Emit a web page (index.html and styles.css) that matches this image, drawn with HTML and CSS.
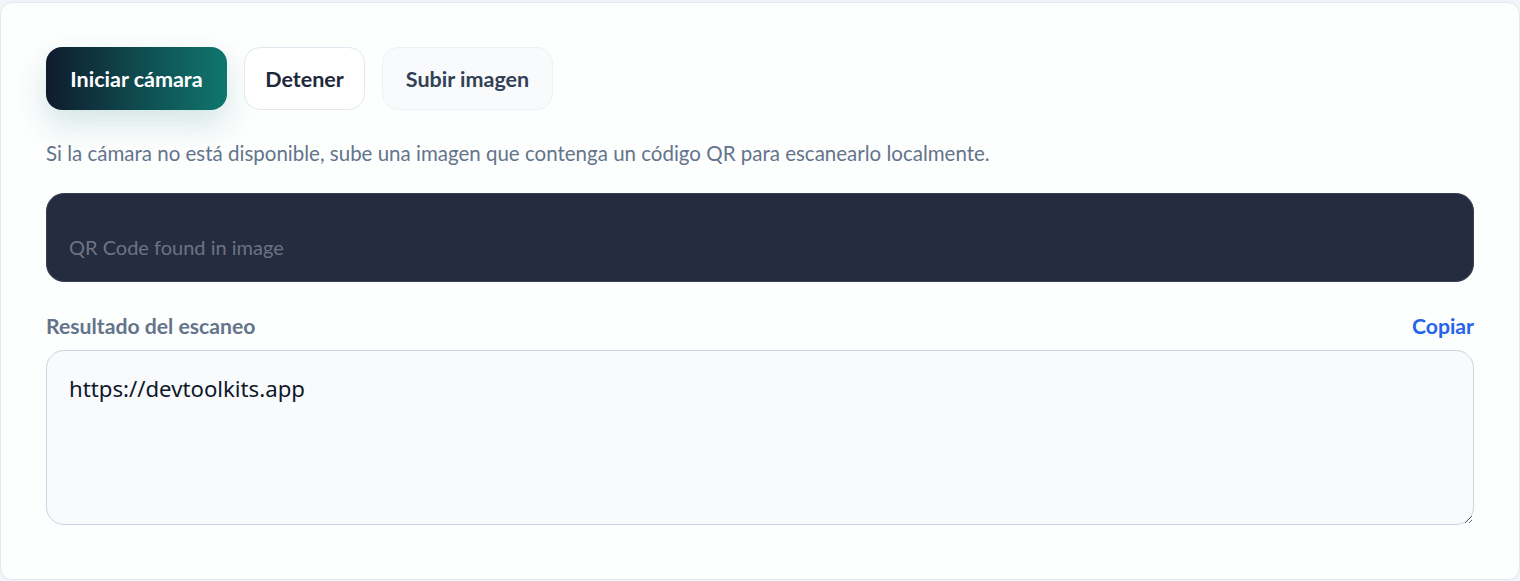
FILE: index.html
```html
<!DOCTYPE html>
<html lang="es">
  <head>
    <meta charset="UTF-8" />
    <meta name="viewport" content="width=device-width, initial-scale=1.0" />
    <title>Escáner QR</title>
    <link rel="stylesheet" href="styles.css">
  </head>
  <body>
    <div class="scanner-card">
      <div class="actions">
        <button class="btn btn-primary">Iniciar cámara</button>
        <button class="btn btn-outline">Detener</button>
        <button class="btn btn-soft">Subir imagen</button>
      </div>
      <p class="hint">
        Si la cámara no está disponible, sube una imagen que contenga un código QR para escanearlo localmente.
      </p>
      <div class="preview">
        <span class="preview-status">QR Code found in image</span>
      </div>
      <div class="result-head">
        <label for="result">Resultado del escaneo</label>
        <button class="copy-btn">Copiar</button>
      </div>
      <textarea id="result" class="result">https://devtoolkits.app</textarea>
    </div>
  </body>
</html>
```

FILE: styles.css
```css
* {
  box-sizing: border-box;
}
body {
  margin: 0;
  padding-top: 2px;
  font-family: "Lato", "Liberation Sans", sans-serif;
  background: #f1f5f9;
}
.scanner-card {
  background: #fdfefe;
  border: 1px solid #e2e8f0;
  border-radius: 12px;
  padding: 44px 45px 53px;
  height: 578px;
}
.actions {
  display: flex;
  gap: 17px;
}
.btn {
  height: 63px;
  padding: 0;
  border-radius: 16px;
  font-family: inherit;
  font-size: 21.5px;
  font-weight: 700;
  color: #1e293b;
  cursor: pointer;
}
.btn-primary {
  width: 181px;
  border: none;
  color: #ffffff;
  background: linear-gradient(90deg, #0f1b2d 0%, #0f4f52 55%, #0f766e 100%);
  box-shadow: 0 14px 30px rgba(15, 118, 110, 0.18);
}
.btn-outline {
  width: 121px;
  background: #ffffff;
  border: 1px solid #e2e8f0;
}
.btn-soft {
  width: 171px;
  background: #f8fafc;
  border: 1px solid #eef2f6;
  color: #334155;
}
.hint {
  margin: 29px 0 26px;
  font-size: 20.5px;
  line-height: 28px;
  color: #64748b;
}
.preview {
  height: 89px;
  border-radius: 18px;
  background: #262c40;
  border: 1px solid #3a4152;
  display: flex;
  align-items: flex-end;
  padding: 0 22px 20px;
}
.preview-status {
  font-size: 20px;
  line-height: 28px;
  color: #6b7385;
}
.result-head {
  display: flex;
  justify-content: space-between;
  align-items: center;
  margin: 31px 0 11px;
}
.result-head label {
  font-size: 21.2px;
  line-height: 26px;
  font-weight: 700;
  color: #64748b;
}
.copy-btn {
  border: none;
  background: none;
  padding: 0;
  font-family: inherit;
  font-size: 21.2px;
  font-weight: 700;
  color: #2563eb;
  cursor: pointer;
}
.result {
  display: block;
  width: 100%;
  height: 175px;
  padding: 22px 22px;
  border: 1px solid #cbd5e1;
  border-radius: 18px;
  background: #f8fafc;
  font-family: "Noto Sans", sans-serif;
  font-size: 22.2px;
  line-height: 32px;
  color: #0f172a;
  resize: vertical;
  outline: none;
}
```
